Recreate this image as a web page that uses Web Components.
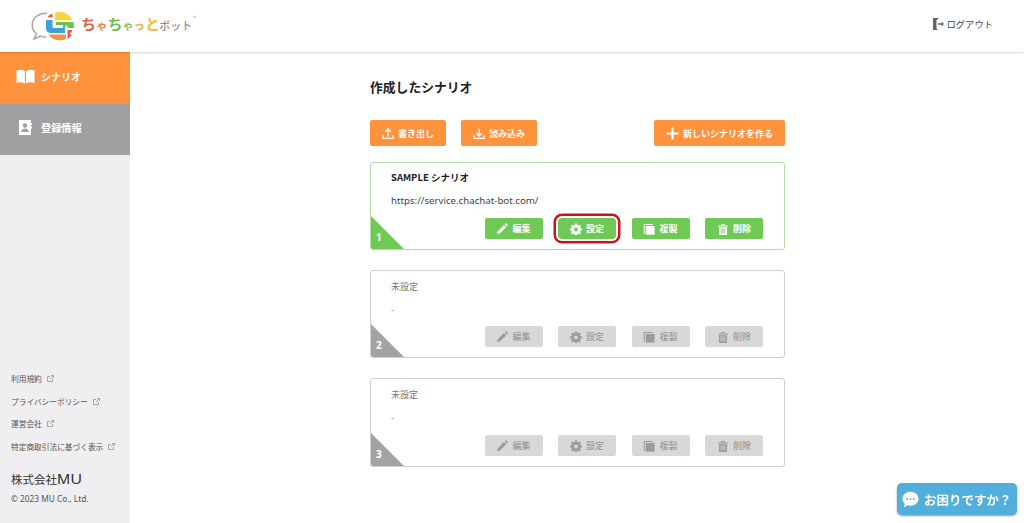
<!DOCTYPE html>
<html lang="ja">
<head>
<meta charset="utf-8">
<title>ちゃちゃっとボット</title>
<style>
html, body { margin: 0; height: 100%; overflow: hidden; background: #fff; }
body { font-family: "Noto Sans CJK JP", "Noto Sans", sans-serif; color: #222; }
app-shell { height: 523px; }
</style>
</head>
<body>
<app-shell>
  <app-header slot="header"></app-header>
  <side-nav slot="side"></side-nav>
  <scenario-list>
    <scenario-card num="1" state="on" highlight>
      <span slot="title">SAMPLE シナリオ</span>
      <span slot="url">https://service.chachat-bot.com/</span>
    </scenario-card>
    <scenario-card num="2" state="off">
      <span slot="title">未設定</span>
      <span slot="url">-</span>
    </scenario-card>
    <scenario-card num="3" state="off">
      <span slot="title">未設定</span>
      <span slot="url">-</span>
    </scenario-card>
  </scenario-list>
</app-shell>
<help-chat></help-chat>

<script>
const ICONS = {
  upload: '<path d="M6.5 10.5V2.2M3.4 5.2l3.1-3.1 3.1 3.1" fill="none" stroke="currentColor" stroke-width="1.4"/><path d="M1 9v3.4h11V9" fill="none" stroke="currentColor" stroke-width="1.4"/>',
  download: '<path d="M6.5 1.5v8.2M3.4 6.7l3.1 3.1 3.1-3.1" fill="none" stroke="currentColor" stroke-width="1.4"/><path d="M1 9v3.4h11V9" fill="none" stroke="currentColor" stroke-width="1.4"/>',
  plus: '<path d="M6.5 0.5v12M0.5 6.5h12" fill="none" stroke="currentColor" stroke-width="2.2"/>',
  pencil: '<path d="M1 12.2l.7-3.1 6.9-6.9 2.4 2.4-6.9 6.9zM9.4 1.4l.9-.9c.3-.3.8-.3 1.1 0l1.3 1.3c.3.3.3.8 0 1.1l-.9.9z" fill="currentColor"/>',
  gear: '<path fill-rule="evenodd" d="M5.4.6h2.2l.3 1.7 1 .4 1.4-1 1.6 1.6-1 1.4.4 1 1.7.3v2.2l-1.7.3-.4 1 1 1.4-1.6 1.6-1.4-1-1 .4-.3 1.7H5.4l-.3-1.7-1-.4-1.4 1-1.6-1.6 1-1.4-.4-1-1.7-.3V6l1.7-.3.4-1-1-1.4 1.6-1.6 1.4 1 1-.4zM6.5 4.9a2.1 2.1 0 1 0 0 4.2 2.1 2.1 0 0 0 0-4.2z" fill="currentColor"/>',
  copy: '<path d="M.8 1h10v1.1H1.9v9.7H.8z" fill="currentColor"/><rect x="3" y="3.2" width="9.6" height="9.4" fill="currentColor"/>',
  trash: '<path d="M1 2.7h11v1.1H1zM4.4 2.7V1h4.2v1.7h-1V2H5.4v.7z" fill="currentColor"/><path d="M2.1 4.6h8.8v7.3c0 .6-.5 1.1-1.1 1.1H3.200c-.6 0-1.100-.5-1.100-1.100z" fill="currentColor"/><path d="M4.500 5.900v5.500M6.500 5.900v5.500M8.500 5.900v5.500" stroke="var(--btn-bg,#6fc955)" stroke-width=".9"/>'
};

// page frame: header on top, sidebar on the left, content in the rest
class AppShell extends HTMLElement {
  constructor() {
    super();
    this.attachShadow({ mode: "open" }).innerHTML = `<style>
:host { display: grid; grid-template-rows: 52px 1fr; grid-template-columns: 130px 1fr; width: 1024px; }
.head { grid-column: 1 / 3; position: relative; z-index: 1; }
.main { min-width: 0; }
</style>
<div class="head"><slot name="header"></slot></div>
<slot name="side"></slot>
<div class="main"><slot></slot></div>`;
  }
}

class AppHeader extends HTMLElement {
  constructor() {
    super();
    this.attachShadow({ mode: "open" }).innerHTML = `<style>
:host { display: flex; align-items: center; height: 52px; box-sizing: border-box; padding: 0 31px 4px 31px; background: #fff; box-shadow: 0 1px 2px rgba(0,0,0,.16); }
.logo { display: flex; align-items: center; gap: 7px; margin-top: 3px; }
.name { display: flex; align-items: baseline; font-size: 15px; font-weight: 700; line-height: 20px; letter-spacing: .2px; white-space: nowrap; margin-top: -2px; }
.name i { font-style: normal; }
.s { font-size: 11px; }
.bot { color: #8f8f8f; font-size: 11px; font-weight: 500; letter-spacing: 0; margin-left: -1px; }
.r { color: #aaa; font-size: 5px; line-height: 7px; align-self: flex-start; margin: 0 0 0 1px; }
.out { margin-left: auto; display: flex; align-items: center; gap: 3px; font-size: 9.300px; color: #444; }
svg { display: block; }
</style>
<div class="logo">
  <svg width="43" height="30" viewBox="0 0 43 30">
    <path d="M16 2.2C8 1.800 1.200 6.800 1.200 14c0 3.600 1.700 6.600 4.300 8.800L3 28l6.400-2.900c2 .7 4 1 6 .9" fill="none" stroke="#a8a8a8" stroke-width="1.500"/>
    <path d="M24 1.700a13.500 13.500 0 0 1 17.300 7.500H24z" fill="#f7d53b"/>
    <path d="M17 5l4.300-2.500 .6 3.700h-4.700z" fill="#ea5a45"/>
    <path d="M15 9h6.500v6.400c0 1 .6 1.500 1.500 1.500h11v5H20c-3 0-5-2-5-5z" fill="#3fa1d8"/>
    <path d="M25 11h17.600l.4 6H36.500v-2.500h-2v2.500H32v-3h-7z" fill="#6fbf4e"/>
    <path d="M17.500 23.500H35v4.200a13.500 13.500 0 0 1-17.500-4.200z" fill="#f6923b"/>
    <path d="M36.500 19h4.400v1.800l-2.400 1.700 2.200 1.800-3.200 3.200h-1z" fill="#e85a4a"/>
  </svg>
  <div class="name"><i style="color:#ea5a45">ち</i><i class="s" style="color:#ea7d4a">ゃ</i><i style="color:#6fbf4e">ち</i><i class="s" style="color:#8fc450">ゃ</i><i class="s" style="color:#f3a93b">っ</i><i style="color:#f2c12e">と</i><i class="bot">ボット</i><i class="r">®</i></div>
</div>
<div class="out">
  <svg width="11" height="12" viewBox="0 0 11 12"><path d="M0 0h5.500v1L3.500 2v9l2 1H0z" fill="#666"/><path d="M5 5.200h3.500V3.500L11 6l-2.500 2.500V6.800H5z" fill="#666"/></svg>
  <span>ログアウト</span>
</div>`;
  }
}

class NavItem extends HTMLElement {
  constructor() {
    super();
    this.attachShadow({ mode: "open" }).innerHTML = `<style>
:host { display: flex; align-items: center; gap: 6px; height: 52px; box-sizing: border-box; padding: 0 0 3px 16px; color: #fff; font-size: 10px; font-weight: 700; background: #ff923c; }
:host([kind="gray"]) { background: #a09fa1; padding: 0 0 5px 19px; gap: 9px; height: 51px; font-size: 10.200px; }
</style><slot name="icon"></slot><slot></slot>`;
  }
}

class FootLink extends HTMLElement {
  constructor() {
    super();
    this.attachShadow({ mode: "open" }).innerHTML = `<style>
:host { display: flex; align-items: center; gap: 5px; height: 12px; font-size: 7.700px; color: #555; white-space: nowrap; }
svg { display: block; }
</style><slot></slot><svg width="7" height="7" viewBox="0 0 7 7"><path d="M5.500 4v2.500h-5v-5H3M3 4l3.300-3.300M4 .5h2.500V3" fill="none" stroke="#888" stroke-width=".7"/></svg>`;
  }
}

class SideNav extends HTMLElement {
  constructor() {
    super();
    this.attachShadow({ mode: "open" }).innerHTML = `<style>
:host { display: flex; flex-direction: column; background: #efeef0; height: 471px; }
.links { margin-top: auto; padding: 0 0 18px 11px; display: flex; flex-direction: column; }
.list { display: flex; flex-direction: column; gap: 10.600px; }
.co { display: flex; align-items: center; margin-top: 18.500px; font-size: 11.500px; line-height: 16px; color: #333; }
.mu { font-family: "Liberation Sans", sans-serif; font-size: 14px; letter-spacing: .3px; font-weight: 400; transform: scaleX(1.130); transform-origin: left; }
.copy { margin-top: 6px; font-family: "Noto Sans", sans-serif; font-size: 8.300px; line-height: 12px; color: #555; }
svg { display: block; }
</style>
<nav-item>
  <svg slot="icon" width="19" height="15" viewBox="0 0 18 15"><path d="M0 1.500C3 .3 6 .5 8.400 2v12.500C6 13.200 3 13 0 14zM18 1.500C15 .3 12 .5 9.600 2v12.500c2.400-1.300 5.400-1.500 8.400-.5z" fill="#fff"/></svg>
  シナリオ
</nav-item>
<nav-item kind="gray">
  <svg slot="icon" width="13" height="15" viewBox="0 0 13 15"><path fill-rule="evenodd" d="M0 0h12v15H0zM6 3.300a2.200 2.200 0 1 0 0 4.400 2.200 2.200 0 0 0 0-4.400zM2.200 12h7.600c0-2.300-1.700-3.600-3.800-3.600S2.200 9.700 2.200 12z" fill="#fff"/><path d="M12 3h1v2h-1zM12 6.500h1v2h-1z" fill="#fff"/></svg>
  登録情報
</nav-item>
<div class="links">
  <div class="list">
    <foot-link>利用規約</foot-link>
    <foot-link>プライバシーポリシー</foot-link>
    <foot-link>運営会社</foot-link>
    <foot-link>特定商取引法に基づく表示</foot-link>
  </div>
  <div class="co">株式会社<span class="mu">MU</span></div>
  <div class="copy">© 2023 MU Co., Ltd.</div>
</div>`;
  }
}

class ActionBtn extends HTMLElement {
  constructor() {
    super();
    this.attachShadow({ mode: "open" });
  }
  connectedCallback() {
    const icon = ICONS[this.getAttribute("icon")] || "";
    this.shadowRoot.innerHTML = `<style>
:host { --btn-bg: #6fc955; display: inline-flex; align-items: center; justify-content: center; gap: 4px; box-sizing: border-box; width: 58px; height: 21px; border-radius: 2px; background: var(--btn-bg); color: #fff; font-size: 9px; font-weight: 700; white-space: nowrap; }
:host([tone="off"]) { --btn-bg: #d8d8d8; color: #9b9b9b; font-weight: 500; }
:host([tone="orange"]) { --btn-bg: #ff923c; height: 26px; }
:host([ring]) { box-shadow: 0 0 0 2px #fff, 0 0 0 4.500px #c9141f; border-radius: 4px; }
svg { display: block; width: 12px; height: 12px; }
:host([icon="plus"]) svg { width: 13px; height: 13px; }
</style><svg viewBox="0 0 13 13">${icon}</svg><slot></slot>`;
  }
}

class ScenarioCard extends HTMLElement {
  constructor() {
    super();
    this.attachShadow({ mode: "open" });
  }
  connectedCallback() {
    const off = this.getAttribute("state") === "off";
    const tone = off ? 'tone="off"' : "";
    const ring = this.hasAttribute("highlight") ? "ring" : "";
    this.shadowRoot.innerHTML = `<style>
:host { display: flex; flex-direction: column; position: relative; box-sizing: border-box; height: 88px; padding: 7px 21px 10px 20px; border: 1.500px solid #b4dea6; border-radius: 3px; background: #fff; overflow: hidden; }
:host([state="off"]) { border-color: #cfcfcf; padding-top: 9px; }
.title { font-size: 9.500px; line-height: 14px; font-weight: 700; color: #222; }
.url { margin-top: 10px; font-family: "Noto Sans", sans-serif; font-size: 9.700px; line-height: 14px; color: #444; }
:host([state="off"]) .title { font-weight: 400; color: #777; font-size: 9px; }
:host([state="off"]) .url { color: #999; margin-top: 9px; }
.acts { margin-top: auto; display: flex; justify-content: flex-end; gap: 15.500px; }
.corner { position: absolute; left: 0; bottom: 0; width: 33px; height: 33px; background: #6fc955; clip-path: polygon(0 0, 100% 100%, 0 100%); }
:host([state="off"]) .corner { background: #a3a3a3; }
.num { position: absolute; left: 5px; bottom: 6px; font-family: "Noto Sans", sans-serif; font-size: 10px; line-height: 12px; font-weight: 700; color: #fff; }
</style>
<div class="title"><slot name="title"></slot></div>
<div class="url"><slot name="url"></slot></div>
<div class="acts">
  <action-btn icon="pencil" ${tone}>編集</action-btn>
  <action-btn icon="gear" ${tone} ${ring}>設定</action-btn>
  <action-btn icon="copy" ${tone}>複製</action-btn>
  <action-btn icon="trash" ${tone}>削除</action-btn>
</div>
<div class="corner"></div><div class="num">${this.getAttribute("num")}</div>`;
  }
}

class ScenarioList extends HTMLElement {
  constructor() {
    super();
    this.attachShadow({ mode: "open" }).innerHTML = `<style>
:host { display: flex; flex-direction: column; width: 415px; margin-left: 240px; }
h1 { margin: 25px 0 0; font-size: 12.800px; line-height: 19px; font-weight: 700; color: #222; }
.bar { display: flex; gap: 15px; margin: 24px 0 16px; }
.bar action-btn { width: 76px; }
.bar .new { width: 131px; margin-left: auto; }
.cards { display: flex; flex-direction: column; gap: 20px; }
::slotted(scenario-card:last-child) { height: 89px; }
</style>
<h1>作成したシナリオ</h1>
<div class="bar">
  <action-btn tone="orange" icon="upload">書き出し</action-btn>
  <action-btn tone="orange" icon="download">読み込み</action-btn>
  <action-btn class="new" tone="orange" icon="plus">新しいシナリオを作る</action-btn>
</div>
<div class="cards"><slot></slot></div>`;
  }
}

class HelpChat extends HTMLElement {
  constructor() {
    super();
    this.attachShadow({ mode: "open" }).innerHTML = `<style>
:host { position: fixed; right: 7px; bottom: 8px; display: flex; align-items: center; gap: 5px; box-sizing: border-box; width: 120px; height: 32px; padding-left: 5px; border-radius: 5px; background: #52aedb; box-shadow: 0 1px 2px rgba(0,0,0,.4); color: #fff; font-size: 12.500px; font-weight: 700; white-space: nowrap; }
svg { display: block; }
</style>
<svg width="17" height="17" viewBox="0 0 17 17"><path d="M8.500.8c4.400 0 8 3.100 8 7s-3.600 7-8 7c-1 0-2-.2-2.900-.5L2 16.500l.8-3.700C1.300 11.500.5 9.800.5 7.800c0-3.900 3.600-7 8-7z" fill="#fff"/><circle cx="5.200" cy="8" r=".9" fill="#52aedb"/><circle cx="8.500" cy="8" r=".9" fill="#52aedb"/><circle cx="11.800" cy="8" r=".9" fill="#52aedb"/></svg>
<span>お困りですか？</span>`;
  }
}

customElements.define("app-shell", AppShell);
customElements.define("app-header", AppHeader);
customElements.define("nav-item", NavItem);
customElements.define("foot-link", FootLink);
customElements.define("side-nav", SideNav);
customElements.define("action-btn", ActionBtn);
customElements.define("scenario-card", ScenarioCard);
customElements.define("scenario-list", ScenarioList);
customElements.define("help-chat", HelpChat);
</script>
</body>
</html>
